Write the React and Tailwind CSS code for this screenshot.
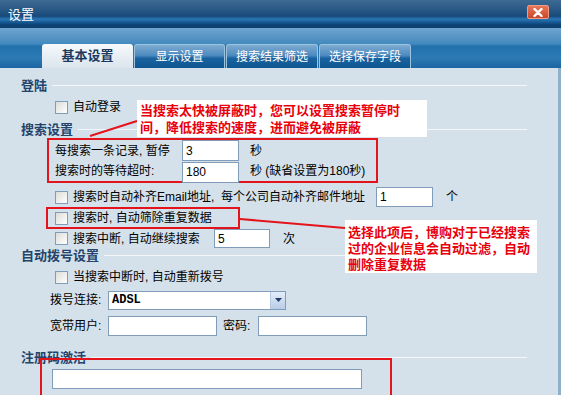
import React from 'react';

const Checkbox = () => (
  <span className="inline-block w-[13px] h-[13px] shrink-0 border border-[#7f9db9] bg-[linear-gradient(135deg,#dcdcd7,#ffffff)] mr-[5px]" />
);

const Input = ({ value = '', className = '' }) => (
  <div className={`bg-white border border-[#7f9db9] flex items-center pl-[3px] text-[12px] text-black ${className}`}>
    {value}
  </div>
);

const Section = ({ title, className = '' }) => (
  <div className={`flex items-center ${className}`}>
    <span className="text-[13px] font-bold text-[#24446c] leading-none whitespace-nowrap">{title}</span>
    <div className="flex-1 h-px bg-[#f3f7fa] ml-[5px]" />
  </div>
);

const Tab = ({ label, active, w }) =>
  active ? (
    <div className={`${w} h-[24px] rounded-t-[3px] bg-[linear-gradient(#f6f9fb,#dbe5ed)] flex items-center justify-center text-[13px] font-bold text-[#1b3a60]`}>
      {label}
    </div>
  ) : (
    <div className={`${w} h-[24px] rounded-t-[3px] border border-b-0 border-[#9cc3e0] bg-[linear-gradient(#7eaad0_0%,#4d8bc0_45%,#1b63a0_58%,#0e5690_100%)] flex items-center justify-center text-[12px] text-white`}>
      {label}
    </div>
  );

export default function App() {
  return (
    <div className="relative w-[561px] h-[395px] overflow-hidden flex flex-col font-['Liberation_Sans','Noto_Sans_CJK_SC',sans-serif] text-black">
      {/* title bar */}
      <div className="h-[28px] shrink-0 flex items-center justify-between bg-[linear-gradient(#3c6a93_0%,#225280_45%,#17497a_58%,#2a77b6_68%,#0b4378_88%,#123e6a_100%)]">
        <span className="pl-[8px] text-white text-[13px] leading-none">设置</span>
        <div className="mr-[12px] mt-[-4px] w-[22px] h-[14px] rounded-[2px] border border-[#f29a7e] bg-[linear-gradient(#e8765a,#c9472c)] flex items-center justify-center">
          <svg width="10" height="9" viewBox="0 0 10 9">
            <path d="M1.5 1 L8.5 8 M8.5 1 L1.5 8" stroke="#ffffff" strokeWidth="2.4" strokeLinecap="round" />
          </svg>
        </div>
      </div>

      {/* tab band */}
      <div className="h-[40px] shrink-0 flex items-end pl-[42px] gap-[1px] bg-[linear-gradient(#6ea5d0_0%,#4f8fc2_30%,#428abf_40%,#2271ad_45%,#2d7ab4_75%,#1a65a2_100%)]">
        <Tab label="基本设置" active w="w-[91px]" />
        <Tab label="显示设置" w="w-[91px]" />
        <Tab label="搜索结果筛选" w="w-[92px]" />
        <Tab label="选择保存字段" w="w-[92px]" />
      </div>

      {/* content */}
      <div className="flex-1 bg-[#d5e1ea] border-r-[3px] border-[#8fb0c9] pl-[21px] pr-[31px] pt-[8px] text-[12px]">
        <Section title="登陆" className="h-[18px]" />
        <div className="h-[26px] flex items-center pl-[34px]">
          <Checkbox />
          <span>自动登录</span>
        </div>
        <Section title="搜索设置" className="h-[18px]" />

        <div className="ml-[26px] w-[331px] h-[45px] border-2 border-[#e3141c] pl-[6px] flex flex-col">
          <div className="h-[21px] flex items-center">
            <span className="w-[127px] whitespace-nowrap">每搜索一条记录, 暂停</span>
            <Input value="3" className="w-[57px] h-[21px]" />
            <span className="ml-[11px]">秒</span>
          </div>
          <div className="h-[20px] flex items-center">
            <span className="w-[127px] whitespace-nowrap">搜索时的等待超时:</span>
            <Input value="180" className="w-[57px] h-[21px] mt-[2px]" />
            <span className="ml-[11px] whitespace-nowrap">秒 (缺省设置为180秒)</span>
          </div>
        </div>

        <div className="mt-[3px] h-[22px] flex items-center pl-[34px]">
          <Checkbox />
          <span className="w-[303px] whitespace-nowrap">搜索时自动补齐Email地址,&nbsp; 每个公司自动补齐邮件地址</span>
          <Input value="1" className="w-[57px] h-[20px]" />
          <span className="ml-[13px]">个</span>
        </div>

        <div className="-mt-[1px] ml-[25px] w-[194px] h-[22px] border-2 border-[#e3141c] pl-[7px] flex items-center">
          <Checkbox />
          <span className="whitespace-nowrap">搜索时, 自动筛除重复数据</span>
        </div>

        <div className="h-[19px] flex items-center pl-[34px]">
          <Checkbox />
          <span className="w-[141px] whitespace-nowrap">搜索中断, 自动继续搜索</span>
          <Input value="5" className="w-[56px] h-[19px]" />
          <span className="ml-[13px]">次</span>
        </div>

        <Section title="自动拨号设置" className="h-[14px]" />

        <div className="mt-[4px] h-[22px] flex items-center pl-[34px]">
          <Checkbox />
          <span>当搜索中断时, 自动重新拨号</span>
        </div>

        <div className="mt-[2px] h-[20px] flex items-center pl-[29px]">
          <span className="w-[58px] whitespace-nowrap">拨号连接:</span>
          <div className="w-[178px] h-[19px] bg-white border border-[#7f9db9] flex items-center justify-between">
            <span className="pl-[3px] text-[12px] font-['Liberation_Mono',monospace] font-bold">ADSL</span>
            <div className="w-[15px] h-full bg-[linear-gradient(#e4edf9,#b8cbe8)] border-l border-[#b6c8e4] flex items-center justify-center">
              <svg width="7" height="4" viewBox="0 0 7 4">
                <path d="M0 0 H7 L3.5 4 Z" fill="#1f3b66" />
              </svg>
            </div>
          </div>
        </div>

        <div className="mt-[6px] h-[20px] flex items-center pl-[29px]">
          <span className="w-[58px] whitespace-nowrap">宽带用户:</span>
          <Input className="w-[109px] h-[20px]" />
          <span className="ml-[6px] w-[35px]">密码:</span>
          <Input className="w-[109px] h-[20px]" />
        </div>

        <Section title="注册码激活" className="mt-[12px] h-[18px]" />

        <div className="relative -mt-[8px] ml-[19px] w-[352px] h-[50px] border-2 border-[#e3141c] pl-[10px] pt-[9px]">
          <Input className="w-[310px] h-[20px]" />
        </div>
      </div>

      {/* annotations */}
      <svg className="absolute inset-0 pointer-events-none" width="561" height="395">
        <line x1="90" y1="136" x2="137" y2="121" stroke="#e3141c" strokeWidth="2" />
        <line x1="240" y1="219" x2="345" y2="228" stroke="#e3141c" strokeWidth="2" />
      </svg>
      <div className="absolute left-[137px] top-[100px] w-[290px] h-[37px] bg-white pl-[3px] pt-[1px] text-[13px] leading-[17px] font-bold text-[#e8000b] font-['Noto_Sans_CJK_SC',sans-serif] whitespace-nowrap">
        <div>当搜索太快被屏蔽时，您可以设置搜索暂停时</div>
        <div>间，降低搜索的速度，进而避免被屏蔽</div>
      </div>
      <div className="absolute left-[345px] top-[220px] w-[192px] h-[53px] bg-white pl-[3px] pt-[4px] text-[13px] leading-[16px] font-bold text-[#e8000b] font-['Noto_Sans_CJK_SC',sans-serif] whitespace-nowrap">
        <div>选择此项后，博购对于已经搜索</div>
        <div>过的企业信息会自动过滤，自动</div>
        <div>删除重复数据</div>
      </div>
    </div>
  );
}
